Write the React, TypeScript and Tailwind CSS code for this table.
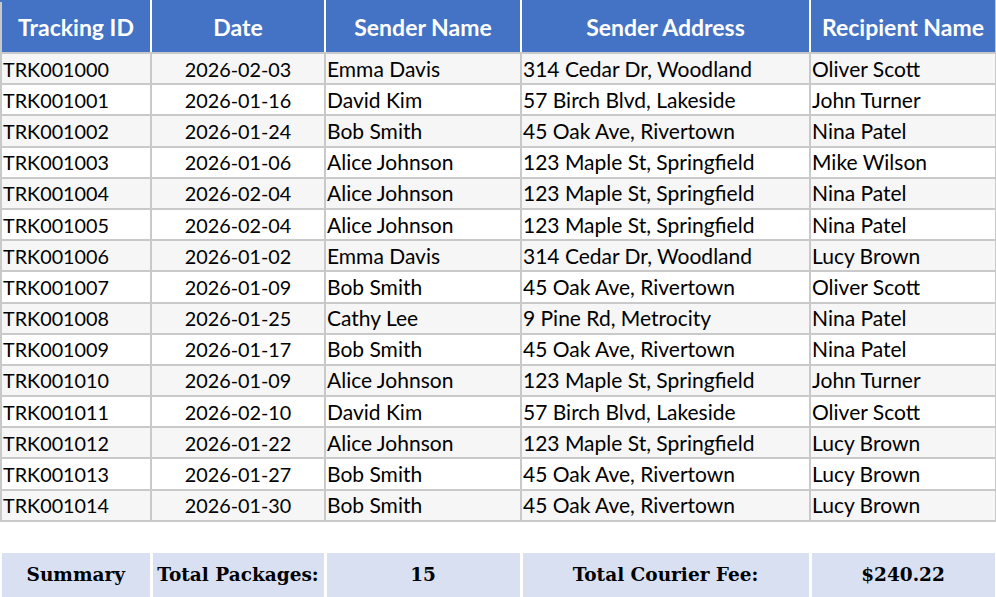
const rows: [string, string, string, string, string][] = [
  ["TRK001000", "2026-02-03", "Emma Davis", "314 Cedar Dr, Woodland", "Oliver Scott"],
  ["TRK001001", "2026-01-16", "David Kim", "57 Birch Blvd, Lakeside", "John Turner"],
  ["TRK001002", "2026-01-24", "Bob Smith", "45 Oak Ave, Rivertown", "Nina Patel"],
  ["TRK001003", "2026-01-06", "Alice Johnson", "123 Maple St, Springfield", "Mike Wilson"],
  ["TRK001004", "2026-02-04", "Alice Johnson", "123 Maple St, Springfield", "Nina Patel"],
  ["TRK001005", "2026-02-04", "Alice Johnson", "123 Maple St, Springfield", "Nina Patel"],
  ["TRK001006", "2026-01-02", "Emma Davis", "314 Cedar Dr, Woodland", "Lucy Brown"],
  ["TRK001007", "2026-01-09", "Bob Smith", "45 Oak Ave, Rivertown", "Oliver Scott"],
  ["TRK001008", "2026-01-25", "Cathy Lee", "9 Pine Rd, Metrocity", "Nina Patel"],
  ["TRK001009", "2026-01-17", "Bob Smith", "45 Oak Ave, Rivertown", "Nina Patel"],
  ["TRK001010", "2026-01-09", "Alice Johnson", "123 Maple St, Springfield", "John Turner"],
  ["TRK001011", "2026-02-10", "David Kim", "57 Birch Blvd, Lakeside", "Oliver Scott"],
  ["TRK001012", "2026-01-22", "Alice Johnson", "123 Maple St, Springfield", "Lucy Brown"],
  ["TRK001013", "2026-01-27", "Bob Smith", "45 Oak Ave, Rivertown", "Lucy Brown"],
  ["TRK001014", "2026-01-30", "Bob Smith", "45 Oak Ave, Rivertown", "Lucy Brown"],
];

const headers = ["Tracking ID", "Date", "Sender Name", "Sender Address", "Recipient Name"];

function Cols() {
  return (
    <colgroup>
      <col className="w-[150px]" />
      <col className="w-[174px]" />
      <col className="w-[196px]" />
      <col className="w-[289px]" />
      <col className="w-[186px]" />
    </colgroup>
  );
}

export default function App() {
  return (
    <div className="w-[996px] h-[597px] bg-white overflow-hidden font-['Lato','Liberation_Sans',sans-serif] text-black">
      <table className="table-fixed border-collapse w-[995px]">
        <Cols />
        <thead>
          <tr className="h-[52px] bg-[#4472c4] text-white text-[23px] font-bold">
            {headers.map((h) => (
              <th key={h} className="border-2 border-[#c9c9c9] border-x-white first:border-l-[#c9c9c9] last:border-r-[#c9c9c9] border-t-[#4472c4] px-0 text-center font-bold whitespace-nowrap">
                {h}
              </th>
            ))}
          </tr>
        </thead>
        <tbody>
          {rows.map((r, i) => (
            <tr key={r[0]} className={`h-[31.2px] ${i % 2 === 0 ? "bg-[#f6f6f6]" : "bg-white"}`}>
              {r.map((c, j) => (
                <td
                  key={j}
                  className={`border-2 border-[#c9c9c9] px-[1px] leading-[24px] whitespace-nowrap ${j === 1 ? "text-center" : "text-left"} ${j < 2 ? "text-[19.8px]" : "text-[21px]"}`}
                >
                  {c}
                </td>
              ))}
            </tr>
          ))}
        </tbody>
      </table>

      <table className="table-fixed border-collapse w-[995px] mt-[28px] font-['DejaVu_Serif','Liberation_Serif',serif] font-bold text-[18.5px]">
        <Cols />
        <tbody>
          <tr className="h-[47px] bg-[#d9e0f2]">
            <td className="border-[3px] border-white border-l-[2px] text-center">Summary</td>
            <td className="border-[3px] border-white text-center">Total Packages:</td>
            <td className="border-[3px] border-white text-center">15</td>
            <td className="border-[3px] border-white text-center">Total Courier Fee:</td>
            <td className="border-[3px] border-white text-center">$240.22</td>
          </tr>
        </tbody>
      </table>
    </div>
  );
}
